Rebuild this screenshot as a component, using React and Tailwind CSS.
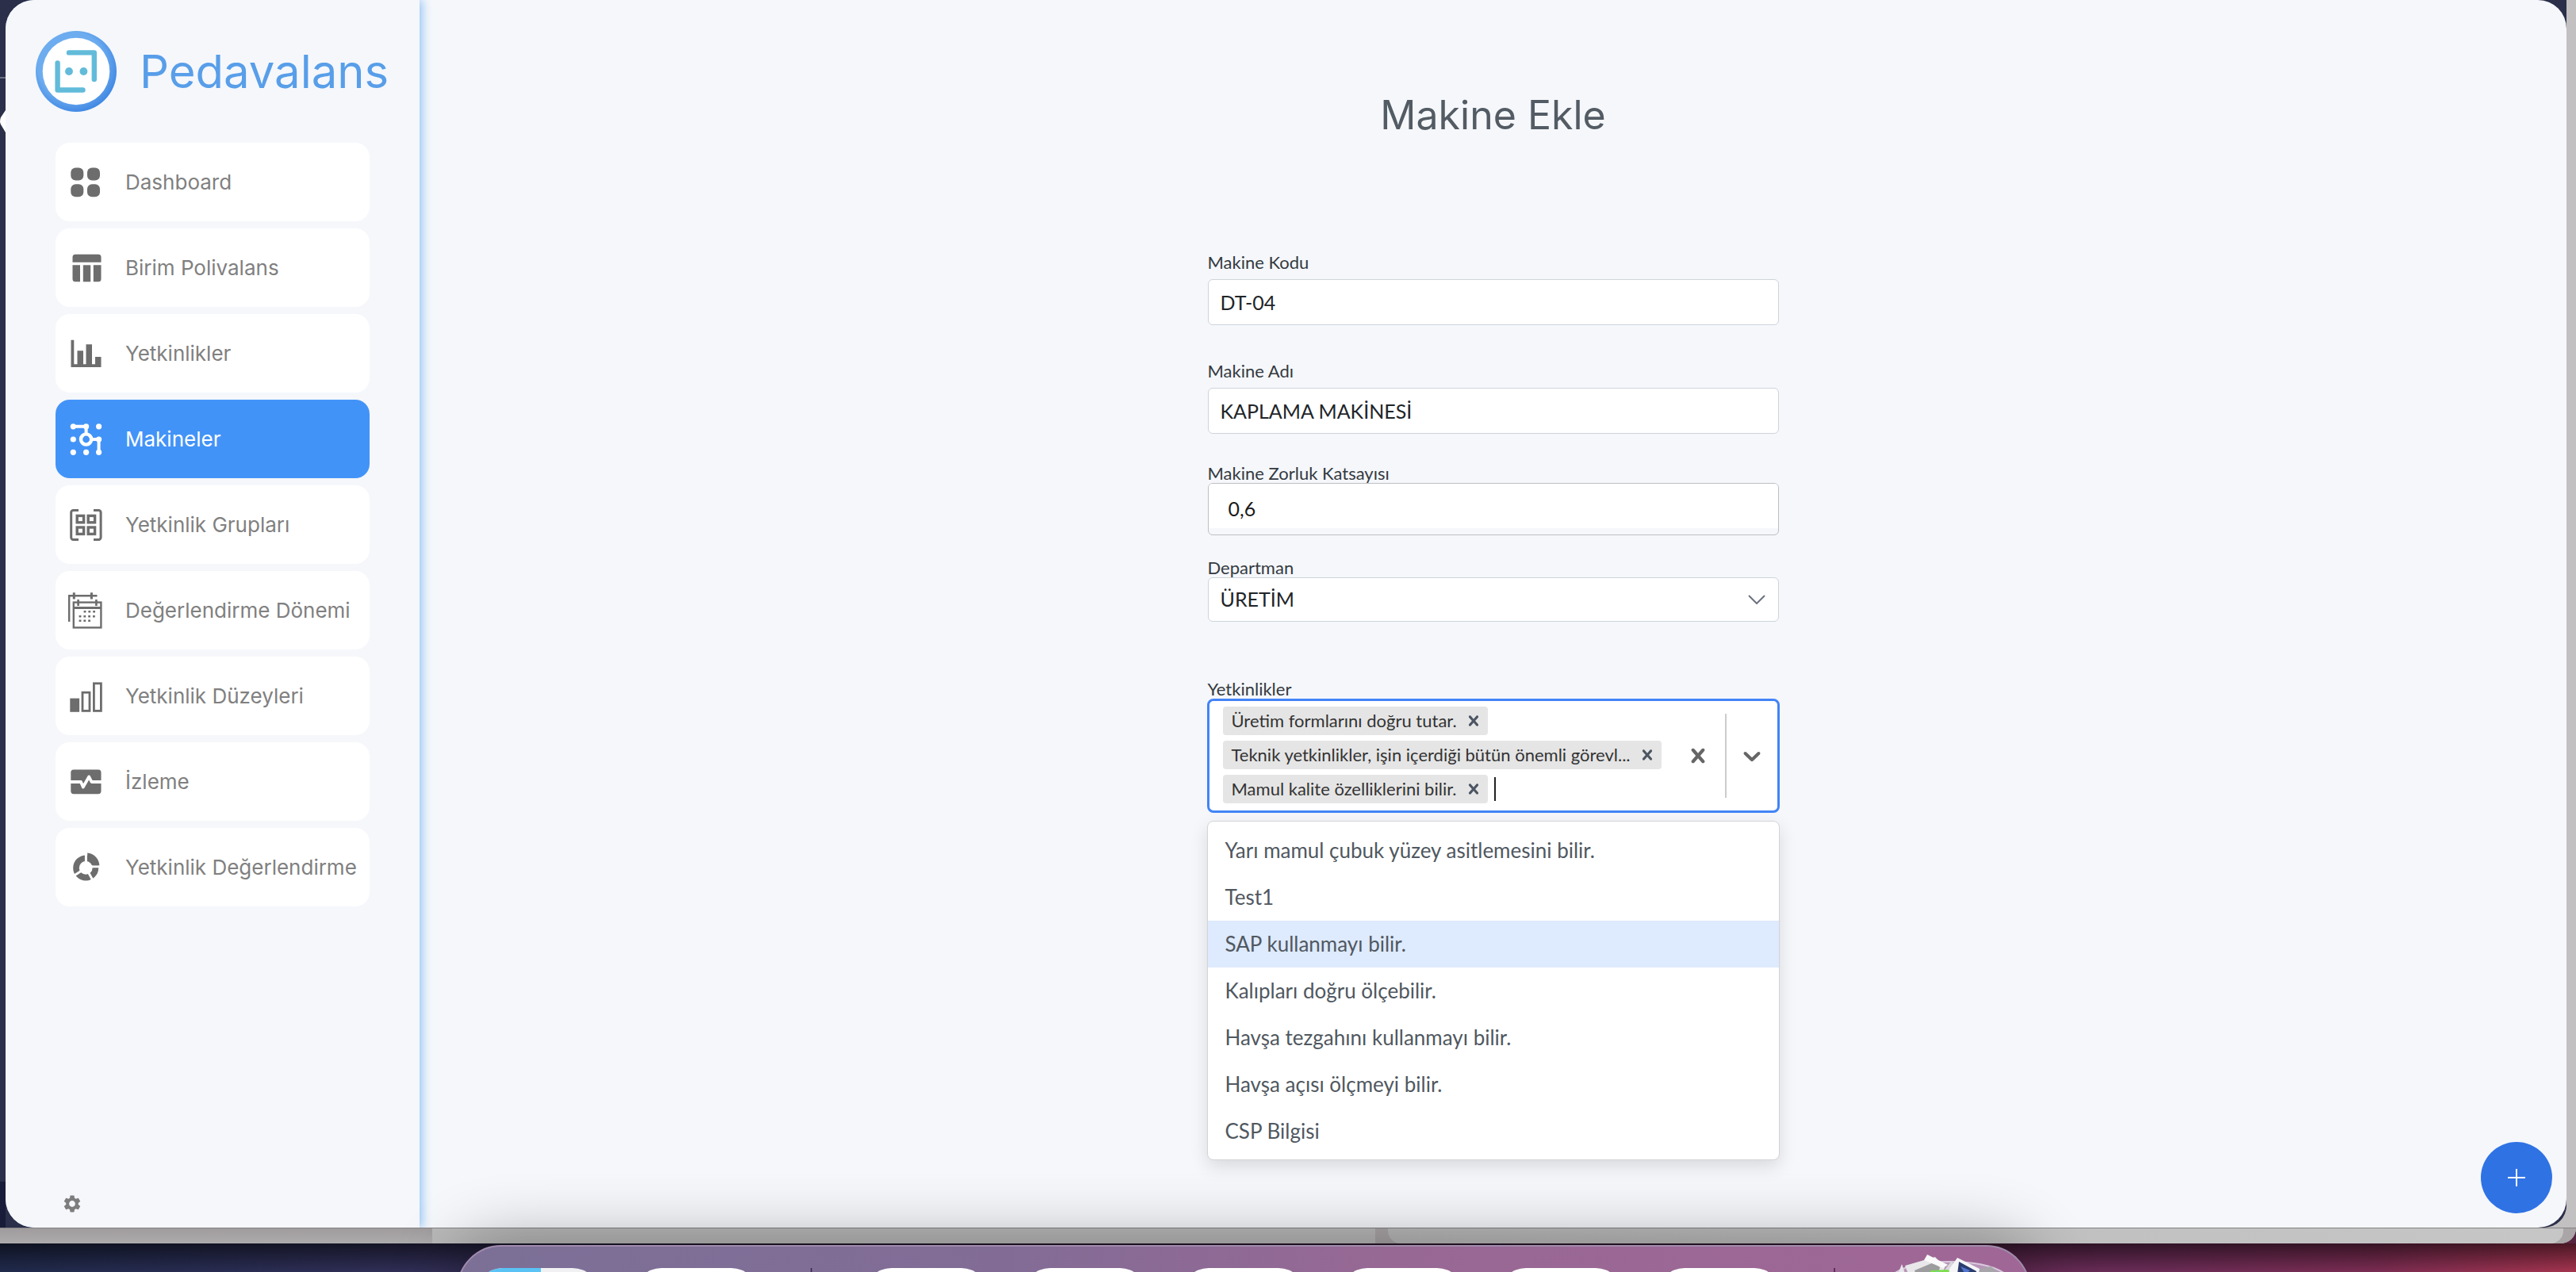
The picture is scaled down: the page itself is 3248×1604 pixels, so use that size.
import React from "react";
import { MdSettings } from "react-icons/md";

const CROSS =
  "M14.348 14.849c-0.469 0.469-1.229 0.469-1.697 0l-2.651-3.030-2.651 3.029c-0.469 0.469-1.229 0.469-1.697 0-0.469-0.469-0.469-1.229 0-1.697l2.758-3.15-2.759-3.152c-0.469-0.469-0.469-1.228 0-1.697s1.228-0.469 1.697 0l2.652 3.031 2.651-3.031c0.469-0.469 1.228-0.469 1.697 0s0.469 1.229 0 1.697l-2.758 3.152 2.758 3.15c0.469 0.469 0.469 1.229 0 1.698z";
const CHEVRON =
  "M4.516 7.548c0.436-0.446 1.043-0.481 1.576 0l3.908 3.747 3.908-3.747c0.533-0.481 1.141-0.446 1.574 0 0.436 0.445 0.408 1.197 0 1.615-0.406 0.418-4.695 4.502-4.695 4.502-0.217 0.223-0.502 0.335-0.787 0.335s-0.57-0.112-0.789-0.335c0 0-4.287-4.084-4.695-4.502s-0.436-1.17 0-1.615z";

function Icon({ children }) {
  return (
    <svg viewBox="0 0 48 48" className="size-12 shrink-0" fill="currentColor" aria-hidden="true">
      {children}
    </svg>
  );
}

const DashboardIcon = () => (
  <Icon>
    <rect x="5.3" y="5.5" width="16" height="16" rx="6" />
    <rect x="26" y="5.5" width="16" height="16" rx="6" />
    <rect x="5.3" y="26.3" width="16" height="16" rx="6" />
    <rect x="26" y="26.3" width="16" height="16" rx="6" />
  </Icon>
);

const TableIcon = () => (
  <Icon>
    <path d="M11 6.8H40a3.5 3.5 0 0 1 3.5 3.5V16.8H7.5V10.3A3.5 3.5 0 0 1 11 6.8Z" />
    <path d="M7.5 20.3H17V41.3H11A3.5 3.5 0 0 1 7.5 37.8Z" />
    <path d="M20.8 20.3H30.2V41.3H20.8Z" />
    <path d="M33.8 20.3H43.5V37.8A3.5 3.5 0 0 1 40 41.3H33.8Z" />
  </Icon>
);

const ChartIcon = () => (
  <Icon>
    <path d="M5.5 6.8H9.3V37.3H13.5V20.3H21V37.3H24.5V12.3H32V37.3H36V28H43.5V41H5.5Z" />
  </Icon>
);

const MachineIcon = () => (
  <Icon>
    <g fill="none" stroke="currentColor" strokeWidth="4">
      <path d="M8.3 7.8H24.6V17" />
      <path d="M31 24H40.6V40.3" />
      <circle cx="24.6" cy="24" r="6.6" strokeWidth="4.4" />
    </g>
    {[
      [8.3, 7.8],
      [24.6, 7.8],
      [40.6, 7.8],
      [8.3, 24],
      [40.6, 24],
      [8.3, 40.3],
      [24.6, 40.3],
      [40.6, 40.3],
    ].map(([x, y]) => (
      <circle key={`${x}-${y}`} cx={x} cy={y} r="3.6" />
    ))}
  </Icon>
);

const GroupIcon = () => (
  <Icon>
    <g fill="none" stroke="currentColor" strokeWidth="3">
      <path d="M15 5.5H8.4A2.7 2.7 0 0 0 5.7 8.2V39.8A2.7 2.7 0 0 0 8.4 42.5H15" />
      <path d="M34 5.5H40.4A2.7 2.7 0 0 1 43.1 8.2V39.8A2.7 2.7 0 0 1 40.4 42.5H34" />
      <rect x="13.2" y="12.4" width="8.4" height="8.4" strokeWidth="3.4" />
      <rect x="27.2" y="12.4" width="8.4" height="8.4" strokeWidth="3.4" />
      <rect x="13.2" y="27" width="8.4" height="8.4" strokeWidth="3.4" />
      <rect x="27.2" y="27" width="8.4" height="8.4" strokeWidth="3.4" />
    </g>
  </Icon>
);

const CalendarIcon = () => (
  <Icon>
    <g fill="none" stroke="currentColor" strokeWidth="2.4">
      <path d="M3.2 38V5.3H38.5" />
      <path d="M9.3 1.3V9.5M31.4 1.3V9.5" strokeWidth="3" />
      <rect x="8.8" y="13.6" width="34.6" height="31.8" />
      <path d="M8.8 20.5H43.4" strokeWidth="3" />
      <path d="M14.6 10V18M37.4 10V18" strokeWidth="2.6" />
      <path d="M21.6 25.2H36M15.6 31.2H36M15.6 36.8H30" strokeWidth="2.6" strokeDasharray="2.8 3" />
    </g>
  </Icon>
);

const LevelIcon = () => (
  <Icon>
    <rect x="4.3" y="26.6" width="11.8" height="17.2" />
    <g fill="none" stroke="currentColor" strokeWidth="2.8">
      <rect x="20" y="19.2" width="9" height="23.2" />
      <rect x="34.4" y="7.8" width="9" height="34.6" />
    </g>
  </Icon>
);

const MonitorIcon = () => (
  <Icon>
    <rect x="5.3" y="8.6" width="38.2" height="30.6" rx="3.6" />
    <path d="M5 24H18L20.8 30.5L28.2 17.5L31.5 24H44" fill="none" stroke="white" strokeWidth="3.8" strokeLinejoin="round" />
  </Icon>
);

const DonutIcon = () => (
  <Icon>
    <circle cx="24.2" cy="24.4" r="12.2" fill="none" stroke="currentColor" strokeWidth="7.6" />
    <path d="M24.4 24.4V6M24.4 22.8H43M24.4 24.4L34 42M24.4 24.4L8 35" stroke="white" strokeWidth="3" fill="none" />
    <path d="M26.2 5.4A17 17 0 0 1 41.4 21.2H33.4A9.5 9.5 0 0 0 26.2 13.6Z" />
  </Icon>
);

const NAV = [
  ["Dashboard", DashboardIcon],
  ["Birim Polivalans", TableIcon],
  ["Yetkinlikler", ChartIcon],
  ["Makineler", MachineIcon],
  ["Yetkinlik Grupları", GroupIcon],
  ["Değerlendirme Dönemi", CalendarIcon],
  ["Yetkinlik Düzeyleri", LevelIcon],
  ["İzleme", MonitorIcon],
  ["Yetkinlik Değerlendirme", DonutIcon],
];

const CHIPS = [
  "Üretim formlarını doğru tutar.",
  "Teknik yetkinlikler, işin içerdiği bütün önemli görevl...",
  "Mamul kalite özelliklerini bilir.",
];

const OPTIONS = [
  "Yarı mamul çubuk yüzey asitlemesini bilir.",
  "Test1",
  "SAP kullanmayı bilir.",
  "Kalıpları doğru ölçebilir.",
  "Havşa tezgahını kullanmayı bilir.",
  "Havşa açısı ölçmeyi bilir.",
  "CSP Bilgisi",
];

function Logo() {
  return (
    <svg viewBox="0 0 102 102" className="size-[102px] shrink-0" aria-hidden="true">
      <defs>
        <radialGradient id="ring" cx="0.44" cy="0.42" r="0.6">
          <stop offset="0.68" stopColor="#6dacef" />
          <stop offset="1" stopColor="#3f87e3" />
        </radialGradient>
      </defs>
      <circle cx="51" cy="51" r="51" fill="url(#ring)" />
      <circle cx="51" cy="51" r="42.3" fill="white" />
      <g fill="none" stroke="#62bbd9" strokeWidth="6.4" strokeLinecap="round" strokeLinejoin="round">
        <path d="M42 27.4H73.8V61" />
        <path d="M27.6 40.5V74.5H59.5" />
      </g>
      <circle cx="42" cy="51" r="4.9" fill="#62bbd9" />
      <circle cx="60.4" cy="51" r="4.9" fill="#62bbd9" />
    </svg>
  );
}

function Sidebar() {
  return (
    <aside className="relative z-10 flex w-[522px] shrink-0 flex-col rounded-l-[36px] bg-[#f5f7fb] pt-[39px] pb-[17px] font-['Inter',sans-serif] shadow-[4px_0_12px_0_#9cc8f5]">
      <a href="#" className="flex items-center gap-[29px] pl-[38px] text-[58px] leading-none text-[#589ee9]">
        <Logo />
        Pedavalans
      </a>
      <nav className="mx-[63px] mt-[39px] flex flex-col gap-[9px]">
        {NAV.map(([label, NavIcon]) => {
          const active = label === "Makineler";
          return (
            <a
              key={label}
              href="#"
              aria-current={active ? "page" : undefined}
              className={
                active
                  ? "flex h-[99px] items-center gap-[26px] rounded-[18px] bg-[#4293f7] pl-[14px] text-[26px] whitespace-nowrap text-white"
                  : "flex h-[99px] items-center gap-[26px] rounded-[18px] bg-white pl-[14px] text-[26px] whitespace-nowrap text-[#6d6d6d]"
              }
            >
              <NavIcon />
              <span className={active ? "" : "text-[#808080]"}>{label}</span>
            </a>
          );
        })}
      </nav>
      <button type="button" aria-label="Ayarlar" className="mt-auto ml-[71px] w-fit text-[#7d7d7d]">
        <MdSettings className="size-[26px]" />
      </button>
    </aside>
  );
}

function CompetencySelect() {
  return (
    <div className="relative -mx-px">
      <div className="flex min-h-[144px] rounded-lg border-[3px] border-[#4284f7] bg-white">
        <ul className="flex flex-1 flex-col gap-[7px] pt-[7px] pb-[8px] pl-[17px]">
          {CHIPS.map((chip, i) => (
            <li key={chip} className="flex items-center">
              <span className="flex h-9 items-center gap-2 rounded bg-[#e5e5e5] pr-[5px] pl-[11px] text-[22px] leading-none whitespace-nowrap text-[#333]">
                {chip}
                <button type="button" aria-label={`${chip} kaldır`} className="text-[#4b5563]">
                  <svg viewBox="0 0 20 20" className="size-[26px]" fill="currentColor">
                    <path d={CROSS} />
                  </svg>
                </button>
              </span>
              {i === CHIPS.length - 1 && (
                <input
                  id="yetkinlikler"
                  type="text"
                  className="ml-2 h-[30px] flex-1 border-l-2 border-[#222] bg-transparent outline-none"
                />
              )}
            </li>
          ))}
        </ul>
        <div className="flex items-center">
          <button type="button" aria-label="Temizle" className="px-4 text-[#666]">
            <svg viewBox="0 0 20 20" className="size-9" fill="currentColor">
              <path d={CROSS} />
            </svg>
          </button>
          <span className="my-4 w-0.5 self-stretch bg-[#ccc]" />
          <button type="button" aria-label="Listeyi aç" className="px-[14px] text-[#666]">
            <svg viewBox="0 0 20 20" className="size-9" fill="currentColor">
              <path d={CHEVRON} />
            </svg>
          </button>
        </div>
      </div>
      <ul
        role="listbox"
        className="absolute inset-x-0 top-full mt-[10px] rounded-lg border border-[#d3d4d8] bg-white pt-[7px] pb-[6px] text-[26px] shadow-[0_8px_22px_0_rgba(0,0,0,0.12)]"
      >
        {OPTIONS.map((option, i) => (
          <li
            key={option}
            role="option"
            aria-selected={i === 2}
            className={
              i === 2
                ? "flex h-[59px] items-center bg-[#deeafd] px-[22px] text-[#505860]"
                : "flex h-[59px] items-center px-[22px] text-[#505860]"
            }
          >
            {option}
          </li>
        ))}
      </ul>
    </div>
  );
}

function MachineForm() {
  const label = "block text-[22px] leading-6 text-[#343a40]";
  const field = "block w-full rounded-md border border-[#ced4da] bg-white px-[15px] text-[#212529] outline-none";
  return (
    <form className="mt-[144px] w-[720px] max-w-full font-['Lato',sans-serif]" onSubmit={(e) => e.preventDefault()}>
      <label htmlFor="kod" className={label}>
        Makine Kodu
      </label>
      <input id="kod" defaultValue="DT-04" className={`${field} mt-[9px] h-[58px] text-[25px]`} />

      <label htmlFor="ad" className={`${label} mt-[46px]`}>
        Makine Adı
      </label>
      <input id="ad" defaultValue="KAPLAMA MAKİNESİ" className={`${field} mt-[9px] h-[58px] text-[25px]`} />

      <label htmlFor="zorluk" className={`${label} mt-[38px]`}>
        Makine Zorluk Katsayısı
      </label>
      <div className="h-[66px] overflow-hidden rounded-md border border-[#bdbfc3]">
        <input
          id="zorluk"
          defaultValue="0,6"
          className="block h-14 w-full bg-white px-[25px] pt-[5px] text-[25px] text-[#1b1b1b] outline-none"
        />
      </div>

      <label htmlFor="departman" className={`${label} mt-[29px]`}>
        Departman
      </label>
      <div className="relative">
        <select id="departman" className={`${field} h-14 appearance-none text-[25px]`}>
          <option>ÜRETİM</option>
        </select>
        <svg
          viewBox="0 0 22 12"
          className="pointer-events-none absolute top-1/2 right-[17px] h-3 w-[22px] -translate-y-1/2"
          fill="none"
          stroke="#6b7280"
          strokeWidth="2"
        >
          <path d="M1 1L11 11L21 1" />
        </svg>
      </div>

      <label htmlFor="yetkinlikler" className={`${label} mt-[73px]`}>
        Yetkinlikler
      </label>
      <CompetencySelect />
    </form>
  );
}

function DesktopEdge() {
  return (
    <div className="flex w-[7px] shrink-0 flex-col bg-[#2b2f4a]" aria-hidden="true">
      <div className="mt-[97px] h-0.5 bg-[#6d7080]" />
      <svg viewBox="0 0 7 28" className="mt-10 h-7 w-[7px]" fill="white">
        <path d="M7 0L1 9Q-1 14 1 18L7 28Z" />
      </svg>
      <div className="mt-auto h-[58px] bg-[#191c38]" />
    </div>
  );
}

function Trash() {
  return (
    <svg viewBox="0 0 156 40" className="-mt-[17px] h-10 w-[156px] shrink-0" aria-hidden="true">
      <path d="M8 24Q30 9 78 9T148 24L152 40H4Z" fill="#b895b8" />
      <path d="M8 24Q30 9 78 9T148 24" fill="none" stroke="#d9c9de" strokeWidth="2" />
      <path d="M14 22L18 12L22 24L20 40H12Z" fill="#e9e6ec" />
      <path d="M22 14L60 3L72 16L64 40H32Z" fill="#e8e8ea" />
      <path d="M34 20L58 10L66 16L60 40H40Z" fill="#9d9d9f" />
      <path d="M50 0L76 13L70 17L46 7Z" fill="#fafafa" />
      <path d="M70 22L80 9L90 16L94 40H66Z" fill="#d8d8dc" />
      <path d="M54 20L76 19L82 24L64 40H50Z" fill="#7ddc4f" />
      <path d="M52 24L64 21L58 40H50Z" fill="#63c6ea" />
      <path d="M88 4L120 20L112 40H76L78 18Z" fill="#f6f6f8" />
      <path d="M90 9L112 21L106 40H86Z" fill="#2b3c6e" />
      <path d="M92 15L104 20L98 25Z" fill="#5277cf" />
      <path d="M116 18L130 15L140 22L136 40H112Z" fill="#a7a4aa" />
    </svg>
  );
}

function Dock() {
  const tile = "h-[140px] w-[156px] shrink-0 rounded-[34px] bg-white";
  return (
    <div className="relative z-20 h-9 shrink-0 bg-[linear-gradient(90deg,#202a4c,#332f58_18%,#4a2a50_45%,#6a2c57_83%,#7a2c52_92%,#a5344f)] pr-[112px]">
      <div className="absolute inset-0 bg-linear-to-b from-black/55 to-transparent" />
      <div className="relative mx-auto flex h-[170px] w-[1984px] max-w-full translate-y-0.5 items-start justify-center rounded-[56px] border-2 border-[#a08bac] bg-[linear-gradient(90deg,#7c7097,#826c96_35%,#986894_60%,#a06796)] pt-[27px] shadow-[0_0_80px_8px_rgba(0,0,0,0.3)]">
        <div className="flex gap-11">
          <div className="flex h-[140px] w-[156px] overflow-hidden rounded-[34px] bg-[#f1f1f3]">
            <div className="w-[82px] bg-[#5ac3f6]" />
          </div>
          <div className={tile} />
        </div>
        <div className="mx-[66px] h-[140px] w-0.5 bg-[#4c355e]" />
        <div className="flex gap-11">
          {[0, 1, 2, 3, 4, 5].map((n) => (
            <div key={n} className={tile} />
          ))}
        </div>
        <div className="mx-[66px] h-[140px] w-0.5 bg-[#5e2f5e]" />
        <Trash />
      </div>
    </div>
  );
}

export default function App() {
  return (
    <div className="flex h-screen flex-col overflow-hidden bg-[#8a3050]">
      <div className="flex flex-1 bg-[#c3c0c1]">
        <DesktopEdge />
        <div className="mr-3 flex min-w-0 flex-1 rounded-br-[28px] bg-[#2b2f4a]">
          <div className="relative flex min-w-0 flex-1 overflow-hidden rounded-[36px] bg-[#f5f7fb]">
            <Sidebar />
            <main className="flex flex-1 flex-col items-center pt-[115px]">
              <h1 className="font-['Inter',sans-serif] text-[50px] leading-[60px] text-[#535b64]">Makine Ekle</h1>
              <MachineForm />
            </main>
            <button
              type="button"
              aria-label="Ekle"
              className="absolute right-[18px] bottom-[18px] flex size-[90px] items-center justify-center rounded-full bg-[#2f72e4]"
            >
              <svg viewBox="0 0 22 22" className="size-[22px]" stroke="white" strokeWidth="2">
                <path d="M11 0V22M0 11H22" />
              </svg>
            </button>
          </div>
        </div>
      </div>
      <div className="bg-[#55243f]" aria-hidden="true">
        <div className="flex h-5 overflow-hidden rounded-br-[20px] border-t border-[#858385] bg-[#c3c0c1]">
          <div className="w-[545px] bg-linear-to-b from-[#a09c9e] to-[#adabac]" />
          <div className="w-[1189px] bg-[#b9b9b9]" />
          <div className="flex-1 bg-[#aaa5a7]">
            <div className="mr-4 ml-4 h-full rounded-br-[16px] rounded-bl-[16px] bg-linear-to-r from-[#b9b9b9] to-[#c6c6c6]" />
          </div>
        </div>
      </div>
      <Dock />
    </div>
  );
}
